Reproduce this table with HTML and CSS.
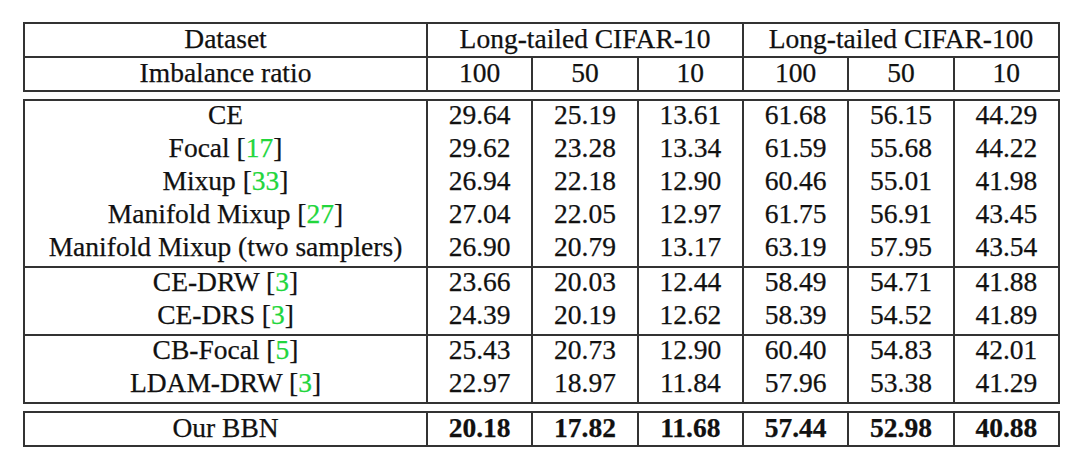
FILE: index.html
```html
<!DOCTYPE html>
<html lang="en">
<head>
<meta charset="utf-8">
<title>Long-tailed CIFAR results</title>
<link rel="stylesheet" href="styles.css">
</head>
<body>
<div class="page">
  <div class="block head">
    <div class="row">
      <div class="cell name">Dataset</div>
      <div class="cell span3">Long-tailed CIFAR-10</div>
      <div class="cell span3">Long-tailed CIFAR-100</div>
    </div>
    <div class="row sep">
      <div class="cell name">Imbalance ratio</div>
      <div class="cell">100</div><div class="cell">50</div><div class="cell">10</div>
      <div class="cell">100</div><div class="cell">50</div><div class="cell">10</div>
    </div>
  </div>

  <div class="block body">
    <div class="row">
      <div class="cell name">CE</div>
      <div class="cell">29.64</div><div class="cell">25.19</div><div class="cell">13.61</div>
      <div class="cell">61.68</div><div class="cell">56.15</div><div class="cell">44.29</div>
    </div>
    <div class="row">
      <div class="cell name">Focal [<span class="cite">17</span>]</div>
      <div class="cell">29.62</div><div class="cell">23.28</div><div class="cell">13.34</div>
      <div class="cell">61.59</div><div class="cell">55.68</div><div class="cell">44.22</div>
    </div>
    <div class="row">
      <div class="cell name">Mixup [<span class="cite">33</span>]</div>
      <div class="cell">26.94</div><div class="cell">22.18</div><div class="cell">12.90</div>
      <div class="cell">60.46</div><div class="cell">55.01</div><div class="cell">41.98</div>
    </div>
    <div class="row">
      <div class="cell name">Manifold Mixup [<span class="cite">27</span>]</div>
      <div class="cell">27.04</div><div class="cell">22.05</div><div class="cell">12.97</div>
      <div class="cell">61.75</div><div class="cell">56.91</div><div class="cell">43.45</div>
    </div>
    <div class="row">
      <div class="cell name">Manifold Mixup (two samplers)</div>
      <div class="cell">26.90</div><div class="cell">20.79</div><div class="cell">13.17</div>
      <div class="cell">63.19</div><div class="cell">57.95</div><div class="cell">43.54</div>
    </div>
    <div class="row sep">
      <div class="cell name">CE-DRW [<span class="cite">3</span>]</div>
      <div class="cell">23.66</div><div class="cell">20.03</div><div class="cell">12.44</div>
      <div class="cell">58.49</div><div class="cell">54.71</div><div class="cell">41.88</div>
    </div>
    <div class="row">
      <div class="cell name">CE-DRS [<span class="cite">3</span>]</div>
      <div class="cell">24.39</div><div class="cell">20.19</div><div class="cell">12.62</div>
      <div class="cell">58.39</div><div class="cell">54.52</div><div class="cell">41.89</div>
    </div>
    <div class="row sep">
      <div class="cell name">CB-Focal [<span class="cite">5</span>]</div>
      <div class="cell">25.43</div><div class="cell">20.73</div><div class="cell">12.90</div>
      <div class="cell">60.40</div><div class="cell">54.83</div><div class="cell">42.01</div>
    </div>
    <div class="row">
      <div class="cell name">LDAM-DRW [<span class="cite">3</span>]</div>
      <div class="cell">22.97</div><div class="cell">18.97</div><div class="cell">11.84</div>
      <div class="cell">57.96</div><div class="cell">53.38</div><div class="cell">41.29</div>
    </div>
  </div>

  <div class="block foot">
    <div class="row">
      <div class="cell name">Our BBN</div>
      <div class="cell best">20.18</div><div class="cell best">17.82</div><div class="cell best">11.68</div>
      <div class="cell best">57.44</div><div class="cell best">52.98</div><div class="cell best">40.88</div>
    </div>
  </div>
</div>
</body>
</html>
```

FILE: styles.css
```css
html, body {
  margin: 0;
  padding: 0;
  background: #ffffff;
}

.page {
  padding: 22px 0 0 23px;
  display: flex;
  flex-direction: column;
  gap: 7px;
  font-family: "Liberation Serif", "Times New Roman", serif;
  font-size: 27.5px;
  color: #111111;
  -webkit-text-stroke: 0.25px #111111;
}

.block {
  width: 1037px;
  box-sizing: border-box;
  border: 2px solid #333333;
}

.row {
  display: grid;
  grid-template-columns: 401px repeat(6, 1fr);
}

.row.sep {
  border-top: 2px solid #333333;
}

.head .row {
  height: 32px;
}

.body .row {
  height: 33px;
}

.foot .row {
  height: 32px;
}

.cell {
  box-sizing: border-box;
  border-left: 2px solid #333333;
  text-align: center;
  line-height: 29px;
  white-space: nowrap;
}

.body .cell {
  line-height: 28px;
}

.cell.name {
  border-left: none;
}

.cell.span3 {
  grid-column: span 3;
}

.cite {
  color: #22d63c;
  -webkit-text-stroke: 0.25px #22d63c;
}

.best {
  font-weight: bold;
}
```
